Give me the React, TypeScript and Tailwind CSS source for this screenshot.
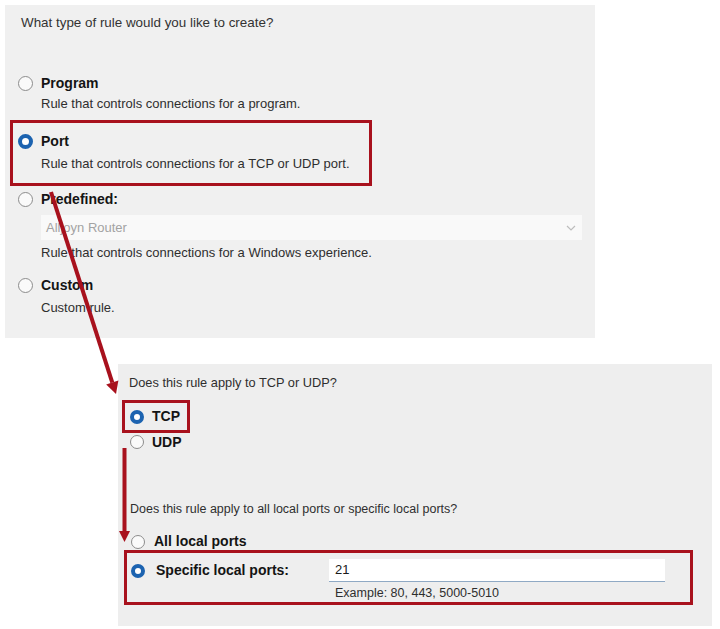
import React from 'react';

const font = { fontFamily: '"Liberation Sans", Arial, sans-serif' };

type RadioProps = { checked?: boolean; size?: 'md' | 'sm' };

const Radio: React.FC<RadioProps> = ({ checked, size = 'md' }) => {
  const dim = size === 'md' ? 'w-[15px] h-[15px]' : 'w-[14px] h-[14px]';
  return checked ? (
    <span className={`${dim} shrink-0 rounded-full border-[4px] border-[#1c63b0] bg-white`} />
  ) : (
    <span className={`${dim} shrink-0 rounded-full border border-[#8c8c8c] bg-[#fafafa]`} />
  );
};

const Option: React.FC<{ label: string; checked?: boolean }> = ({ label, checked }) => (
  <div className="flex h-[20px] items-center gap-[8px]">
    <Radio checked={checked} />
    <span className="text-[14px] font-bold text-[#141414]">{label}</span>
  </div>
);

const Desc: React.FC<{ children: React.ReactNode; className?: string }> = ({ children, className = '' }) => (
  <div className={`h-[18px] pl-[23px] text-[13px] leading-[18px] text-[#2e2e2e] ${className}`}>{children}</div>
);

// Connector arrows drawn over both dialogs
const Arrows: React.FC = () => (
  <svg className="pointer-events-none absolute left-0 top-0" width="720" height="629" viewBox="0 0 720 629">
    <line x1="51" y1="192" x2="112.3" y2="382.6" stroke="#a8111d" strokeWidth="4" />
    <polygon points="116,394 106.2,384.6 118.4,380.6" fill="#a8111d" />
    <line x1="124.5" y1="448" x2="124.5" y2="532" stroke="#a8111d" strokeWidth="4" />
    <polygon points="124.5,542 119,531 130,531" fill="#a8111d" />
  </svg>
);

export default function App() {
  return (
    <div className="relative h-[629px] w-[720px] overflow-hidden bg-white" style={font}>
      {/* rule type page */}
      <div className="ml-[5px] mt-[5px] h-[333px] w-[590px] bg-[#f0f0f0] pt-[10px]">
        <div className="pl-[16px] text-[13.4px] leading-[16px] text-[#333]">What type of rule would you like to create?</div>

        <div className="mt-[42px] pl-[13px]">
          <Option label="Program" />
          <Desc className="mt-[2px]">Rule that controls connections for a program.</Desc>
        </div>

        <div className="ml-[5px] mt-[7px] w-[362px] border-[3px] border-[#a8111d] pb-[10px] pl-[5px] pt-[8px]">
          <Option label="Port" checked />
          <Desc className="mt-[4px]">Rule that controls connections for a TCP or UDP port.</Desc>
        </div>

        <div className="mt-[3px] pl-[13px]">
          <Option label="Predefined:" />
          <div className="ml-[23px] mt-[6px] flex h-[25px] w-[541px] items-center justify-between bg-[#f9f9f9] pl-[5px] pr-[6px] text-[13px] text-[#a3a3a3]">
            <span>Alljoyn Router</span>
            <svg width="10" height="6" viewBox="0 0 10 6">
              <path d="M1 1 L5 5 L9 1" fill="none" stroke="#bdbdbd" strokeWidth="1.2" />
            </svg>
          </div>
          <Desc className="mt-[4px]">Rule that controls connections for a Windows experience.</Desc>
        </div>

        <div className="mt-[13px] pl-[13px]">
          <Option label="Custom" />
          <Desc className="mt-[4px]">Custom rule.</Desc>
        </div>
      </div>

      {/* protocol and ports page */}
      <div className="ml-[118px] mt-[26px] h-[262px] w-[594px] bg-[#eeeeee] pt-[11px] text-[12.5px] text-[#2e2e2e]">
        <div className="pl-[11px] text-[12.8px] leading-[16px]">Does this rule apply to TCP or UDP?</div>

        <div className="ml-[4px] mt-[9px] flex h-[33px] w-[68px] items-center gap-[8px] border-[3px] border-[#a8111d] pl-[5px]">
          <Radio checked size="sm" />
          <span className="text-[14px] font-bold text-[#141414]">TCP</span>
        </div>
        <div className="flex h-[18px] items-center gap-[8px] pl-[12px]">
          <Radio size="sm" />
          <span className="text-[14px] font-bold text-[#141414]">UDP</span>
        </div>

        <div className="mt-[50px] pl-[12px] leading-[16px]">Does this rule apply to all local ports or specific local ports?</div>

        <div className="mt-[16px] flex h-[17px] items-center gap-[9px] pl-[13px]">
          <Radio size="sm" />
          <span className="text-[14px] font-bold text-[#141414]">All local ports</span>
        </div>

        <div className="ml-[6px] flex h-[55px] w-[569px] border-[3px] border-[#a8111d]">
          <div className="flex h-[34px] w-[202px] items-center gap-[11px] pl-[4px] pt-[1px]">
            <Radio checked size="sm" />
            <span className="text-[14px] font-bold text-[#141414]">Specific local ports:</span>
          </div>
          <div className="pt-[6px]">
            <div className="flex h-[23px] w-[336px] items-center border-b border-[#8fa9c4] bg-white pl-[6px] text-[13px] text-[#1a1a1a]">
              21
            </div>
            <div className="mt-[3px] pl-[6px] leading-[16px]">Example: 80, 443, 5000-5010</div>
          </div>
        </div>
      </div>

      <Arrows />
    </div>
  );
}
